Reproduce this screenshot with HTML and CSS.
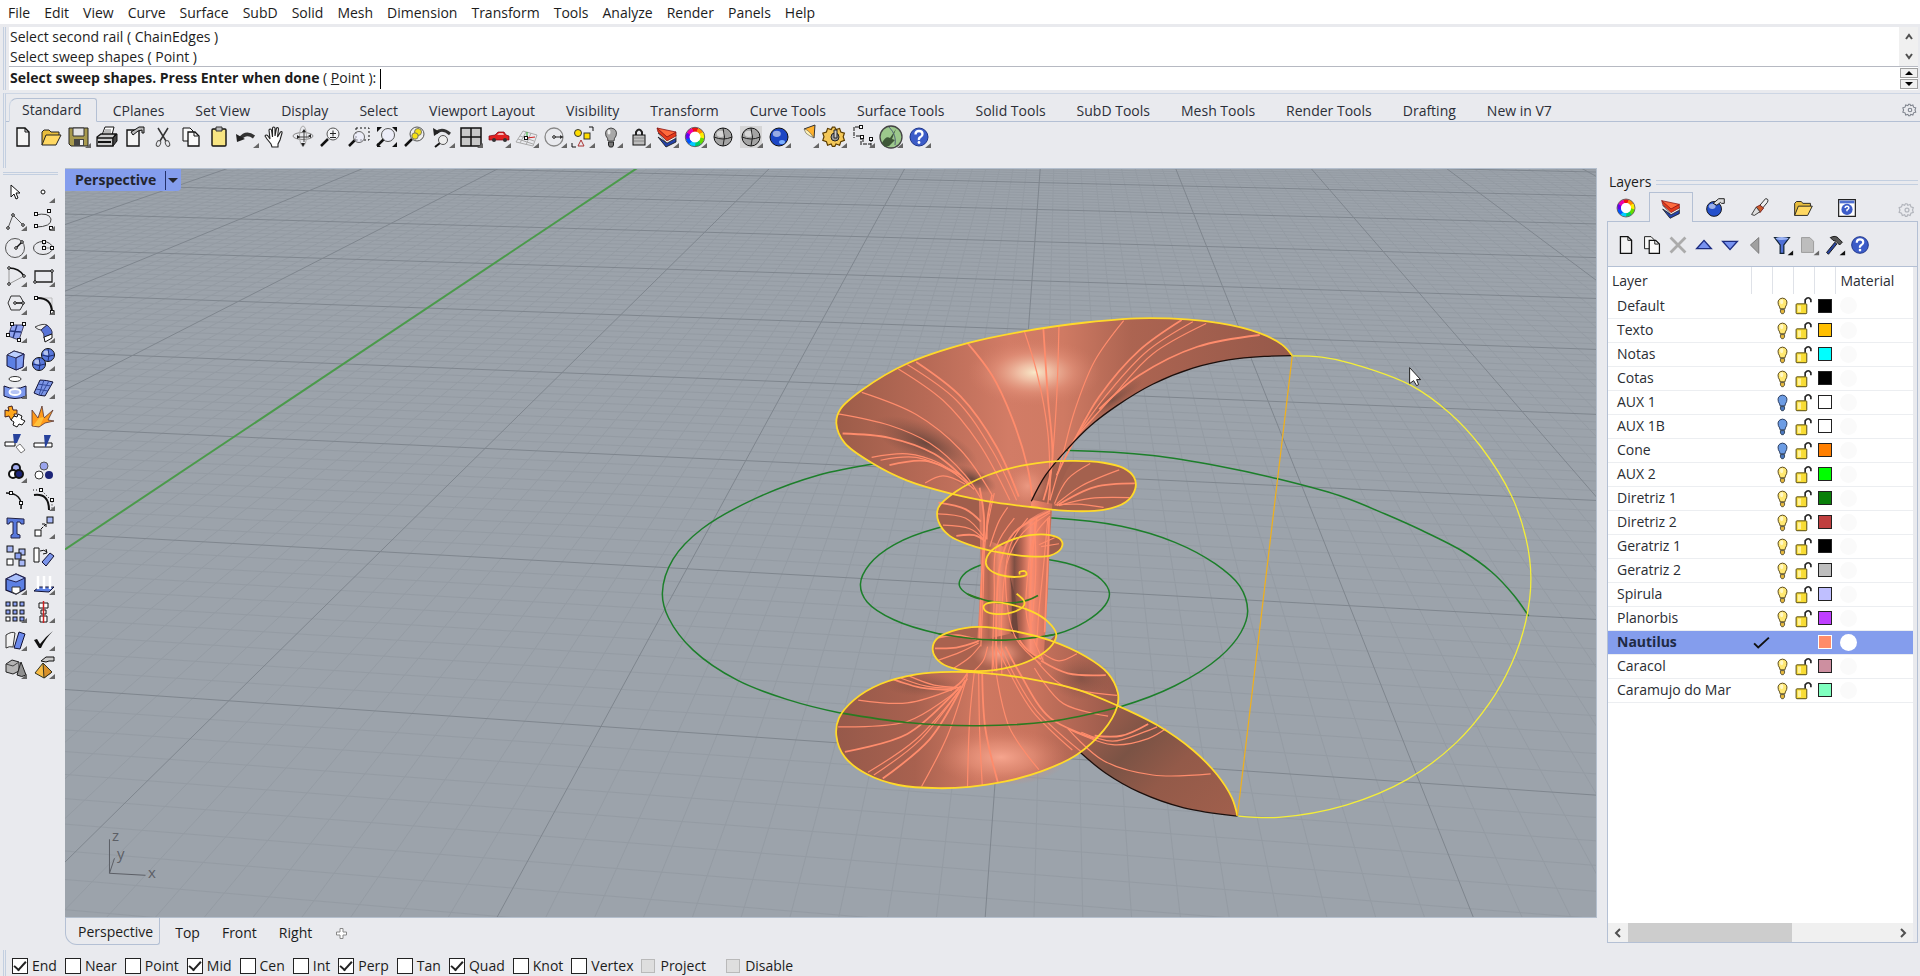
FILE: index.html
```html
<!DOCTYPE html>
<html lang="en">
<head>
<meta charset="utf-8">
<title>Rhinoceros - Perspective</title>
<link rel="stylesheet" href="styles.css">
</head>
<body>
<nav class="menubar" aria-label="Main menu">
  <button>File</button><button>Edit</button><button>View</button><button>Curve</button><button>Surface</button><button>SubD</button><button>Solid</button><button>Mesh</button><button>Dimension</button><button>Transform</button><button>Tools</button><button>Analyze</button><button>Render</button><button>Panels</button><button>Help</button>
</nav>

<section class="command" aria-label="Command line">
  <div class="history">
    <div class="history-lines">
      <p>Select second rail ( ChainEdges )</p>
      <p>Select sweep shapes ( Point )</p>
    </div>
    <div class="history-scroll">
      <button aria-label="Scroll up"><svg viewBox="0 0 8 8"><path d="M1 6l3-4 3 4" fill="none" stroke="#505050" stroke-width="2"/></svg></button>
      <button aria-label="Scroll down"><svg viewBox="0 0 8 8"><path d="M1 2l3 4 3-4" fill="none" stroke="#505050" stroke-width="2"/></svg></button>
    </div>
  </div>
  <div class="prompt">
    <label for="cmd"><b>Select sweep shapes. Press Enter when done</b> ( <u>P</u>oint ):</label>
    <input id="cmd" type="text" autocomplete="off">
    <div class="spinner">
      <button aria-label="Previous"><svg viewBox="0 0 8 4"><path d="M0 4l4-4 4 4z"/></svg></button>
      <button aria-label="Next"><svg viewBox="0 0 8 4"><path d="M0 0l4 4 4-4z"/></svg></button>
    </div>
  </div>
</section>

<section class="ribbon">
  <div class="tabs" role="tablist">
    <button class="tab active" role="tab">Standard</button><button class="tab" role="tab">CPlanes</button><button class="tab" role="tab">Set View</button><button class="tab" role="tab">Display</button><button class="tab" role="tab">Select</button><button class="tab" role="tab">Viewport Layout</button><button class="tab" role="tab">Visibility</button><button class="tab" role="tab">Transform</button><button class="tab" role="tab">Curve Tools</button><button class="tab" role="tab">Surface Tools</button><button class="tab" role="tab">Solid Tools</button><button class="tab" role="tab">SubD Tools</button><button class="tab" role="tab">Mesh Tools</button><button class="tab" role="tab">Render Tools</button><button class="tab" role="tab">Drafting</button><button class="tab" role="tab">New in V7</button>
    <span class="fill"></span>
    <button class="gear" data-icon="gear" aria-label="Toolbar options"></button>
  </div>
  <div class="toolbar" data-icons="new open save+ print props cut copy paste undo+ pan rotate zoom zoomwin zoomext zoomsel undoview+ views+ car+ cplane+ osnap+ select+ bulb+ lock+ layers+ wheel+ shade ghost+ render+ spot+ options+ dim+ grass+ help+"></div>
</section>

<main class="work">
  <aside class="sidebar">
    <div class="grip"></div>
    <div class="tools" data-icons="arrow point+ polyline+ curve+ circle+ ellipse+ arc+ rect+ polygon+ fillet+ srfpts+ srfsweep+ box+ spheres+ extrude+ patch+ puzzle explode trim split group+ ungroup editpts ctrlpts+ text move+ copies orient boxedit+ project+ array+ align+ bend+ check+ solids+ pyramid+"></div>
  </aside>

  <section class="stage">
    <div class="viewport">
      <svg id="scene" class="scene" viewBox="65 169 1532 749" preserveAspectRatio="xMidYMid slice" role="img" aria-label="Perspective view of the swept surface">
        <defs>
          <linearGradient id="gHorn" gradientUnits="userSpaceOnUse" x1="440" y1="0" x2="1460" y2="0">
            <stop offset="0" stop-color="#9c5c49"/><stop offset=".2" stop-color="#b76a56"/><stop offset=".38" stop-color="#d27c66"/><stop offset=".5" stop-color="#cf7a63"/><stop offset=".65" stop-color="#ac6451"/><stop offset="1" stop-color="#96594a"/>
          </linearGradient>
          <radialGradient id="gShine"><stop offset="0" stop-color="#f9e8c8"/><stop offset=".25" stop-color="#f2c3a9" stop-opacity=".9"/><stop offset=".6" stop-color="#e89880" stop-opacity=".5"/><stop offset="1" stop-color="#d47e68" stop-opacity="0"/></radialGradient>
          <radialGradient id="gGlow"><stop offset="0" stop-color="#f6a58e"/><stop offset=".5" stop-color="#ea957d" stop-opacity=".6"/><stop offset="1" stop-color="#d47e68" stop-opacity="0"/></radialGradient>
          <radialGradient id="gDark"><stop offset="0" stop-color="#64443b" stop-opacity=".9"/><stop offset="1" stop-color="#7c4f42" stop-opacity="0"/></radialGradient>
          <linearGradient id="gTube" gradientUnits="userSpaceOnUse" x1="758" y1="0" x2="922" y2="0">
            <stop offset="0" stop-color="#e67f66"/><stop offset=".15" stop-color="#b06652"/><stop offset=".3" stop-color="#f08b70"/><stop offset=".42" stop-color="#c8705a"/><stop offset=".5" stop-color="#7e4f43"/><stop offset=".6" stop-color="#b56552"/><stop offset=".72" stop-color="#fa8f74"/><stop offset=".85" stop-color="#df7c64"/><stop offset="1" stop-color="#c86f59"/>
          </linearGradient>
          <linearGradient id="gFoot" gradientUnits="userSpaceOnUse" x1="440" y1="0" x2="1075" y2="0">
            <stop offset="0" stop-color="#96594a"/><stop offset=".28" stop-color="#a8614f"/><stop offset=".5" stop-color="#cf7861"/><stop offset=".7" stop-color="#c8735d"/><stop offset="1" stop-color="#98594a"/>
          </linearGradient>
          <linearGradient id="gTail" gradientUnits="userSpaceOnUse" x1="990" y1="1180" x2="1330" y2="1460">
            <stop offset="0" stop-color="#a8614f"/><stop offset=".35" stop-color="#7b5345"/><stop offset=".6" stop-color="#935a49"/><stop offset="1" stop-color="#a05f4c"/>
          </linearGradient>
        </defs>
        <rect x="65" y="169" width="1532" height="749" fill="#9ca3ab"/>
        <g id="grid"></g>
        <g id="model" transform="translate(640 290) scale(.4464 .3571)"></g>
        <g id="shapeCurve" transform="scale(1.2245)"></g>
        <g stroke="#5c5f66" stroke-width="1" fill="none"><path d="M109.500 840v34l36 2M109.500 874l5-15"/></g>
        <g class="axis"><text x="112" y="842">z</text><text x="117" y="860">y</text><text x="148" y="879">x</text></g>
        <path d="M1410.500 368v16l4-3 3 5 2-1-2-5h4z" fill="#fff" stroke="#222"/>
      </svg>
      <button class="view-title"><span>Perspective</span><i></i></button>
    </div>
    <div class="view-tabs" role="tablist">
      <button class="vtab active" role="tab">Perspective</button><button class="vtab" role="tab">Top</button><button class="vtab" role="tab">Front</button><button class="vtab" role="tab">Right</button>
      <button class="add" aria-label="New viewport"><svg viewBox="0 0 11 11"><path d="M4 .5h3V4h3.500v3H7v3.500H4V7H.5V4H4z" fill="#fff" stroke="#888"/></svg></button>
    </div>
  </section>

  <aside class="panel">
    <h2><span>Layers</span></h2>
    <div class="panel-tabs">
      <button data-icon="wheel" aria-label="Properties"></button><button class="on" data-icon="layers" aria-label="Layers"></button><button data-icon="material" aria-label="Rendering"></button><button data-icon="brush" aria-label="Materials"></button><button data-icon="open" aria-label="Libraries"></button><button data-icon="helpwin" aria-label="Help"></button>
      <span class="fill"></span>
      <button class="gear pale" data-icon="gear" aria-label="Panel options"></button>
    </div>
    <div class="panel-body">
      <div class="panel-tools" data-icons="new copy cross up down back funnel* sheet+ hammer* help"></div>
      <div class="list">
        <table>
          <thead><tr><th class="c-name">Layer</th><th></th><th></th><th></th><th></th><th class="c-mat">Material</th></tr></thead>
          <tbody id="layers"></tbody>
        </table>
      </div>
      <div class="hscroll">
        <button aria-label="Scroll left"><svg viewBox="0 0 8 10"><path d="M6 1L2 5l4 4" fill="none" stroke="#505050" stroke-width="2"/></svg></button>
        <div class="track"><div class="thumb"></div></div>
        <button aria-label="Scroll right"><svg viewBox="0 0 8 10"><path d="M2 1l4 4-4 4" fill="none" stroke="#505050" stroke-width="2"/></svg></button>
      </div>
    </div>
  </aside>
</main>

<footer class="osnap">
  <label><input type="checkbox" checked>End</label><label><input type="checkbox">Near</label><label><input type="checkbox">Point</label><label><input type="checkbox" checked>Mid</label><label><input type="checkbox">Cen</label><label><input type="checkbox">Int</label><label><input type="checkbox" checked>Perp</label><label><input type="checkbox">Tan</label><label><input type="checkbox" checked>Quad</label><label><input type="checkbox">Knot</label><label><input type="checkbox">Vertex</label><label class="soft"><input type="checkbox">Project</label><label class="soft last"><input type="checkbox">Disable</label>
</footer>
<script src="app.js"></script>
</body>
</html>
```
FILE: styles.css
```css
* { box-sizing: border-box; }
body {
  margin: 0;
  height: 100vh;
  display: flex;
  flex-direction: column;
  overflow: hidden;
  background: #e9eaee;
  color: #1c1c1c;
  font: 14px/20px "Open Sans", "Noto Sans", sans-serif;
}
button {
  margin: 0;
  padding: 0;
  border: 0;
  background: none;
  color: inherit;
  font: inherit;
  white-space: nowrap;
}
p, h2 { margin: 0; font: inherit; }
svg { display: block; }
.fill { flex: 1; }

.menubar {
  display: flex;
  gap: 14px;
  height: 24px;
  padding: 3px 8px 1px;
  background: #fff;
}

.command {
  margin: 3px 2px 0 3px;
  padding-left: 3px;
  border-left: 3px double #c3cfe0;
}
.history {
  display: flex;
  height: 39px;
  background: #fff;
}
.history-lines { flex: 1; padding-left: 1px; }
.history-scroll {
  width: 19px;
  display: flex;
  flex-direction: column;
  background: #f0f0f0;
}
.history-scroll button { flex: 1; display: grid; place-items: center; }
.history-scroll svg { width: 8px; height: 8px; }
.prompt {
  display: flex;
  align-items: center;
  height: 24px;
  padding-left: 1px;
  border-top: 1px solid #b6b9c2;
  background: #fff;
}
.prompt label { white-space: pre; padding-bottom: 2px; }
.prompt input {
  flex: 1;
  height: 20px;
  margin-left: 4px;
  padding: 0 2px;
  border: 0;
  border-left: 1px solid #000;
  outline: 0;
  font: inherit;
}
.spinner { width: 18px; display: grid; gap: 1px; }
.spinner button {
  display: grid;
  place-items: center;
  height: 10px;
  border: 1px solid #a0a0a0;
  background: #f0f0f0;
}
.spinner svg { width: 8px; height: 4px; }

.ribbon {
  height: 75px;
  margin: 3px 0 0 3px;
  border-left: 3px double #c3cfe0;
  border-top: 1px solid #cdd6e4;
}
.tabs { display: flex; gap: 1px; height: 28px; padding: 4px 0 0 3px; border-bottom: 1px solid #b4c0d4; }
.tab { height: 24px; padding: 1px 15px 0; color: #2c2f38; line-height: 22px; }
.tab.active {
  border: 1px solid #b4c0d4;
  border-left-color: #cdd6e4;
  border-bottom-color: #e9eaee;
  border-radius: 8px 3px 0 0;
  padding: 0 14px 0 12px;
}
.gear svg { width: 20px; height: 20px; }
.toolbar { display: flex; padding: 1px 0 0 3px; }
.toolbar svg, .tools svg { width: 28px; height: 28px; }

.work { flex: 1; min-height: 0; display: flex; }
.sidebar { width: 65px; padding: 4px 0 0; }
.grip { height: 3px; margin: 0 7px 3px 3px; border: solid #c3cfe0; border-width: 1px 0; }
.tools { display: grid; grid-template-columns: 28px 28px; padding-left: 1px; }

.stage { flex: 1; min-width: 0; display: flex; flex-direction: column; }
.viewport { position: relative; flex: 1; min-height: 0; border: 1px solid #b4bfcd; border-width: 1px 1px 1px 0; }
.scene { width: 100%; height: 100%; }
.scene path { vector-effect: non-scaling-stroke; }
.axis { fill: #5c5f66; font-size: 15px; }
.view-title {
  position: absolute;
  left: 0;
  top: 0;
  display: flex;
  align-items: center;
  gap: 9px;
  height: 22px;
  padding: 0 3px 0 10px;
  border-radius: 0 0 4px 0;
  background: #849ded;
  color: #23252e;
  font-weight: 700;
}
.view-title i { height: 19px; padding-left: 2px; border-left: 1px solid #23306a; display: grid; align-items: center; }
.view-title i::before { content: ""; border: 5px solid transparent; border-top-color: #23252e; border-bottom: 0; }
.view-tabs { display: flex; height: 32px; padding-bottom: 5px; }
.vtab { padding: 2px 11px 0; color: #1c1c1c; }
.vtab.active {
  padding: 2px 6px 0 12px;
  margin-right: 4px;
  border: 1px solid #b4c0d4;
  border-top: 0;
  border-radius: 0 0 3px 12px;
}
.add { padding: 4px 13px 0; }
.add svg { width: 11px; height: 11px; }

.panel { width: 323px; padding: 4px 2px 7px 10px; display: flex; flex-direction: column; }
.panel h2 { display: flex; align-items: center; gap: 5px; padding-left: 2px; }
.panel h2::after { content: ""; flex: 1; height: 3px; border: solid #c3cfe0; border-width: 1px 0; }
.panel-tabs { display: flex; height: 29px; }
.panel-tabs button { width: 44px; padding-top: 2px; display: grid; place-items: center; }
.panel-tabs .on {
  z-index: 1;
  margin-bottom: -1px;
  border: 1px solid #b4c0d4;
  border-bottom: 0;
  background: #e9eaee;
}
.panel-tabs button:first-child { width: 42px; padding-right: 4px; }
.panel-tabs svg, .panel-tools svg { width: 26px; height: 26px; }
.panel-tabs button.gear { width: 22px; padding-top: 6px; }
.panel-tabs .gear.pale svg { width: 22px; height: 22px; opacity: .5; }
.panel-body { flex: 1; min-height: 0; display: flex; flex-direction: column; border: 1px solid #b4c0d4; }
.panel-tools { display: flex; align-items: center; height: 45px; padding: 2px 0 0 5px; border-bottom: 1px solid #b4c0d4; }
.list { flex: 1; margin-right: 4px; background: #fff; overflow: hidden; }
table { width: 100%; border-collapse: collapse; table-layout: fixed; color: #2a2d33; }
th { height: 27px; padding: 0; width: 21px; border-right: 1px solid #dfe2e8; font-weight: 400; text-align: left; }
th.c-name { width: 143px; padding-left: 4px; }
th.c-mat { width: auto; border: 0; padding-left: 5px; }
td { height: 24px; padding: 0; border-bottom: 1px solid #eceef1; text-align: center; }
td:first-child { padding-left: 9px; text-align: left; }
td svg { width: 23px; height: 23px; margin: 0 -1px; }
.swatch { display: block; width: 14px; height: 14px; margin: auto; border: 1px solid #222; }
.ball { display: block; width: 17px; height: 17px; margin-left: 5px; border-radius: 50%; background: #fafafa; }
.current td { background: #849ded; font-weight: 700; color: #1f2a44; }
.current .swatch { border-color: #fff; }
.current .ball { background: #fff; }
.hscroll { display: flex; height: 19px; margin-right: 4px; background: #f0f0f0; }
.hscroll button { width: 20px; display: grid; place-items: center; }
.hscroll svg { width: 8px; height: 10px; }
.track { flex: 1; display: flex; }
.thumb { width: 62%; background: #cdcdcd; }

.osnap {
  display: flex;
  gap: 8px;
  height: 26px;
  margin-left: 3px;
  padding: 6px 0 0 6px;
  border-left: 3px double #c3cfe0;
}
.osnap label { display: flex; align-items: center; gap: 4px; height: 20px; }
.osnap input {
  appearance: none;
  width: 16px;
  height: 16px;
  margin: 0;
  border: 1px solid #222;
  background: #fff;
  display: grid;
  place-items: center;
}
.osnap input:checked::before {
  content: "";
  width: 10px;
  height: 5px;
  margin-bottom: 3px;
  border: solid #222;
  border-width: 0 0 2px 2px;
  transform: rotate(-48deg);
}
.osnap .soft input { width: 14px; height: 14px; border-color: #b9b9b9; background: #dedede; }
.osnap .soft { gap: 5px; }
.osnap .last { margin-left: 12px; }
```
FILE: app.js
```js
const K = 'fill="none" stroke="#111"';
const W = 'fill="#fff" stroke="#111"';
const dot = (x, y) => `<circle cx="${x}" cy="${y}" r="1.300" ${W}/>`;
const sq = (x, y) => `<rect x="${x - 1.5}" y="${y - 1.5}" width="3" height="3" ${W}/>`;
const box = (x, y, s, f) => `<rect x="${x}" y="${y}" width="${s}" height="${s}" fill="${f}" stroke="#111"/>`;
const lens = '<path d="M11 16l-7 7" stroke="#111" stroke-width="2.500"/>';
const ring = (a, b, r, w) => ['#e11', '#f80', '#fe0', '#6d0', '#0c6', '#0cf', '#05f', '#60e', '#e0a'].map((c, i) => {
  const t = (n) => `${(a + r * Math.sin(n * Math.PI / 4.5)).toFixed(1)} ${(b - r * Math.cos(n * Math.PI / 4.5)).toFixed(1)}`;
  return `<path d="M${t(i - .55)}L${t(i)}L${t(i + .55)}" fill="none" stroke="${c}" stroke-width="${w}"/>`;
}).join('');
const ball = (x, y, r, c) => `<circle cx="${x}" cy="${y}" r="${r}" fill="${c}" stroke="#111"/><ellipse cx="${x - r * .25}" cy="${y - r * .35}" rx="${r * .45}" ry="${r * .35}" fill="#fff" opacity=".55"/>`;
const folder = '<path d="M5 22V9l2-2h5l2 2h8v3" fill="#e8bd3c" stroke="#222"/><path d="M5 22l4-10h15l-5 10z" fill="#ffd862" stroke="#222"/>';
const question = '<circle cx="14" cy="14" r="9" fill="#3c5cc8" stroke="#1d3488"/><path d="M10.500 11.500q0-3.500 3.500-3.500t3.500 3q0 2-2 3t-1.500 3" fill="none" stroke="#fff" stroke-width="2.300"/><circle cx="14" cy="19.500" r="1.400" fill="#fff"/>';
const cog = 'M14 6l1 2 3-1 1 3 3 1-1 3 1 3-3 1-1 3-3-1-1 2-2 0-1-2-3 1-1-3-3-1 1-3-1-3 3-1 1-3 3 1 1-2z';

const ICONS = {
  new: '<path d="M8 5h8l4 4v14H8z" fill="#f4f4f4" stroke="#111" stroke-width="1.400"/><path d="M16 5v4h4" ' + K + '/>',
  open: folder,
  save: '<path d="M4 5h19v18H6l-2-2z" fill="#a89a4e" stroke="#222"/><path d="M8 5h11v8H8z" fill="#e4e4e4" stroke="#333"/><path d="M9 16h10v7H9z" fill="#444"/><path d="M15 17h3v5h-3z" fill="#eee"/>',
  print: '<path d="M9 12l3-8h9l-2 8z" fill="#fff" stroke="#111"/><path d="M4 14l4-3h15l-3 4H4zM4 15h16v8H4z" fill="#ccc" stroke="#111" stroke-width="1.300"/><path d="M20 15l4-4v7l-4 5z" fill="#444" stroke="#111"/><path d="M5 19h13" stroke="#111" stroke-width="2"/><path d="M12 7h6M11 9h7" stroke="#777"/>',
  props: '<path d="M6 7h12v16H6z" fill="#f4f4f4" stroke="#111" stroke-width="1.400"/><path d="M10 9l5-3 3-2h5v6h-2V7l-4 1-5 4z" fill="#bbb" stroke="#111"/>',
  cut: '<path d="M9 5l8 13M19 5l-8 13" stroke="#333" stroke-width="1.500"/><ellipse cx="9.500" cy="20.500" rx="2" ry="3" transform="rotate(25 9.500 20.500)" fill="none" stroke="#555"/><ellipse cx="18.500" cy="20.500" rx="2" ry="3" transform="rotate(-25 18.500 20.500)" fill="none" stroke="#555"/>',
  copy: '<path d="M6 5h7l3 3v10H6z" fill="#fafafa" stroke="#111"/><path d="M11 9h7l4 4v10H11z" fill="#fafafa" stroke="#111" stroke-width="1.300"/><path d="M17 9v4h4" ' + K + '/>',
  paste: '<rect x="7" y="6" width="14" height="17" rx="1" fill="#f8e582" stroke="#111" stroke-width="1.400"/><path d="M11 4h6v4h-6z" fill="#bbb" stroke="#333"/>',
  undo: '<path d="M7 16q6-8 14-2" fill="none" stroke="#333" stroke-width="3.500"/><path d="M3 11l1 8 8-3z" fill="#222"/>',
  pan: '<path d="M11 24l-1-3-4-5-2-3q1-2 3 0l2 3-1-9q1-2 2.500 0l1 7V5q1-2 2.500 0v8l1.500-8q2-1 2 1l-1 8 3-5q2-1 1.500 1l-2 7-2 4v3z" fill="#fff" stroke="#222" stroke-width="1.100"/>',
  rotate: '<ellipse cx="14" cy="13" rx="10" ry="3.500" fill="none" stroke="#888"/><ellipse cx="14" cy="13" rx="3.500" ry="10" fill="none" stroke="#aaa"/><path d="M15 8v11M9 14h11" stroke="#444"/><path d="M15 6l2 3h-4zM14 24l2-4h-4zM8 12v4l3-2zM22 11v4l-3-2z" fill="#222"/>',
  zoom: lens + '<circle cx="16" cy="11" r="6" fill="#f2f3f5" stroke="#555"/><path d="M16 7.500v6M13 10.500h6M13 14.500h6" stroke="#222"/>',
  zoomwin: '<rect x="11" y="5" width="13" height="12" fill="none" stroke="#111" stroke-dasharray="2 2"/>' + lens + '<circle cx="14" cy="14" r="5.500" fill="#eef" fill-opacity=".6" stroke="#666"/>',
  zoomext: '<path d="M4 4h5l-5 5zM24 4h-5l5 5zM24 24h-5l5-5zM4 24h4l-4-4z" fill="#111"/>' + lens + '<circle cx="15" cy="12" r="6.500" fill="#eef" fill-opacity=".6" stroke="#555"/>',
  zoomsel: lens + '<circle cx="16" cy="11" r="7" fill="#eee" stroke="#555"/><circle cx="17" cy="9" r="3.500" fill="#f6e216" stroke="#776"/><circle cx="14" cy="13" r="3.200" fill="#f6e216" stroke="#776"/>',
  undoview: '<path d="M7 10q6-6 14 1" fill="none" stroke="#333" stroke-width="3"/><path d="M4 5l1 8 6-4z" fill="#222"/><path d="M11 20l-5 4" stroke="#111" stroke-width="2"/><circle cx="14" cy="17" r="4.500" fill="#eee" stroke="#555"/>',
  views: '<path d="M4 5h20v18H4z" fill="#c8c8c8" stroke="#111" stroke-width="1.500"/><path d="M14 5v18M4 14h20" stroke="#111" stroke-width="1.500"/>',
  car: '<path d="M4 17v-4l6-1 3-3h6l2 3 3 1v4z" fill="#e02020" stroke="#701" stroke-width=".7"/><path d="M12 12l2-2h4l1 2z" fill="#f6b0b0"/><circle cx="9" cy="17" r="2" fill="#333"/><circle cx="20" cy="17" r="2" fill="#333"/>',
  cplane: '<path d="M3 19l7-11 14 4-4 11zM7 13l14 5M13 9l-6 11M18 10l-5 12M5 16l15 5" fill="none" stroke="#aaa"/><path d="M14 15V9" stroke="#2a2"/><path d="M14 15l8-1" stroke="#c22"/>' + sq(13, 15),
  osnap: '<circle cx="13" cy="14" r="9" fill="none" stroke="#888" stroke-width="1.300"/><path d="M13 14h9" stroke="#222"/><path d="M19 12v4l3-2z" fill="#333"/>' + dot(13, 14),
  select: '<circle cx="9" cy="10" r="3.500" fill="#fd0" stroke="#333"/><rect x="15" y="10" width="6" height="6" fill="#fd0" stroke="#333"/><path d="M12 17l3 6H9z" fill="none" stroke="#a33"/><path d="M20 4h4v4M3 20v4h4" ' + K + '/>',
  bulb: '<path d="M11 18q0-3-2-5-2-7 5-8 7 1 5 8-2 2-2 5z" fill="#a8a8a8" stroke="#444"/><path d="M11.500 19h5v3l-1 2h-3l-1-2z" fill="#777" stroke="#222"/><ellipse cx="12" cy="9" rx="1.500" ry="2.500" fill="#eee"/>',
  lock: '<path d="M11 12V9q3-5 6 0v3" fill="none" stroke="#222" stroke-width="2"/><rect x="8" y="12" width="12" height="10" fill="#bdbdbd" stroke="#111"/><path d="M9 15h10M9 18h10" stroke="#888"/>',
  layers: '<path d="M5 14l8 10 10-5v-4l-9 5z" fill="#2543a8" stroke="#111" stroke-width=".8"/><path d="M5 10l9 10 9-5v-3l-9 4z" fill="#fff" stroke="#222" stroke-width=".6"/><path d="M4 5l10 8 9-4v4l-9 5-9-9z" fill="#e43a1a" stroke="#711" stroke-width=".7"/><path d="M4 5l19 4-9 5z" fill="#ff6a3c" stroke="#811" stroke-width=".8"/>',
  wheel: ring(14, 14, 7.5, 4) + '<circle cx="14" cy="14" r="5.300" fill="#fff"/><circle cx="14" cy="14" r="9.700" fill="none" stroke="#333" stroke-width=".7"/>',
  shade: ball(14, 14, 9, '#a4a4a4') + '<path d="M5 14q9 4 18 0M14 5q3 9 0 18" stroke="#222" fill="none"/>',
  ghost: '<rect x="3" y="3" width="22" height="22" fill="#ccc" opacity=".7"/>' + ball(14, 14, 9, '#a4a4a4') + '<path d="M5 14q9 4 18 0M14 5q3 9 0 18" stroke="#222" fill="none"/>',
  render: ball(14, 14, 9, '#1c46c4') + '<ellipse cx="17" cy="19" rx="3" ry="2" fill="#7cb0ff"/>',
  spot: '<path d="M11 6l11-4-1 13z" fill="#ffb12c" stroke="#333"/><path d="M11 6q4 0 10 9l-4-2q-5-2-6-7z" fill="#fff2b4" stroke="#555" stroke-width=".6"/>',
  options: `<path d="${cog}" transform="translate(-3 -3) scale(1.200)" fill="#f4c858" stroke="#5a3c00"/><circle cx="14" cy="14" r="4" fill="#999" stroke="#222"/><path d="M13 7h3v8h-3z" fill="#ccc" stroke="#222"/>`,
  dim: '<path d="M10 4H5v11M10 4h2M7 13h5v10M14 15v4M22 15v9M14 21h8" ' + K + ' stroke-dasharray="4 1"/>' + sq(12, 4) + sq(13, 14) + sq(22, 16),
  grass: '<circle cx="14" cy="14" r="11" fill="#9cc88c" stroke="#444" stroke-width="1.300"/><path d="M5 20q4-8 8-5l6-9-4 10 3 1-6 6-4 1z" fill="#3f5838"/><path d="M12 4q8 8 6 18" fill="none" stroke="#567"/>',
  help: question,
  gear: '<path d="' + cog + '" fill="none" stroke="#7d828c" stroke-width="1.500"/><circle cx="14" cy="14" r="2.500" fill="none" stroke="#7d828c" stroke-width="1.500"/>',

  arrow: '<path d="M10 7v12l3-3 2 5 2-1-2-5h4z" ' + W + '/>',
  point: '<circle cx="14" cy="14" r="2" ' + W + '/>',
  polyline: '<path d="M7 22l5-13 10 10" fill="none" stroke="#555"/>' + dot(7, 22) + dot(12, 9) + dot(22, 19),
  curve: '<path d="M6 9q14-3 16 4 1 8-16 8" fill="none" stroke="#444"/>' + sq(7, 8) + sq(7, 20) + sq(20, 5) + sq(22, 22),
  circle: '<circle cx="14" cy="14" r="9.500" fill="none" stroke="#555"/><path d="M15 14l6-6" stroke="#111" stroke-width="1.500"/>' + dot(15, 14) + dot(21, 8),
  ellipse: '<ellipse cx="14" cy="14" rx="9.500" ry="6.500" fill="none" stroke="#444"/><path d="M15 14V7M15 14h8" stroke="#888"/>' + sq(15, 14) + sq(15, 8) + sq(23, 14),
  arc: '<path d="M8 6v16l15-8" fill="none" stroke="#999"/><path d="M8 6q10 0 15 8" fill="none" stroke="#111" stroke-width="1.500"/>' + dot(8, 6) + dot(8, 22) + dot(23, 14),
  rect: '<path d="M6 9h17v11H6z" fill="none" stroke="#222" stroke-width="1.300"/>' + dot(6, 20) + dot(23, 9),
  polygon: '<path d="M10 6h9l4 7-4 7h-9l-3-7z" fill="none" stroke="#333"/><path d="M14 13h8" stroke="#111" stroke-width="1.500"/>' + dot(14, 13) + dot(22, 13),
  fillet: '<path d="M7 8h16v15" fill="none" stroke="#bbb"/><path d="M7 8q16-1 16 15" fill="none" stroke="#111" stroke-width="2"/>' + sq(7, 8) + sq(23, 22),
  srfpts: '<path d="M11 7l12 0-5 15-11-4z" fill="#8fa2f0" stroke="#446"/><path d="M16 7l-4 13M9 13l11 1" stroke="#24347a" stroke-width="1.300"/>' + sq(11, 6) + sq(23, 6) + sq(7, 17) + sq(18, 22),
  srfsweep: '<path d="M6 9q8-4 12-2l-6 5q-3 0-6-3z" fill="#eee" stroke="#444"/><path d="M12 12l6-5q6 5 5 9l-8 4q1-4-3-8z" fill="#5874d8" stroke="#335"/><path d="M15 19l8-3v4l-7 4z" ' + W + '/>',
  box: '<path d="M6 9l7-4 10 3-1 13-7 3-9-4z" fill="#5c80e4" stroke="#113"/><path d="M6 9l9 3 8-4-10-3z" fill="#bcd0ff" stroke="#335"/><path d="M15 12v12l7-3 1-13z" fill="#7f9cf2" stroke="#225"/>',
  spheres: ball(19, 9, 6.5, '#5878dc') + ball(10, 18, 6.5, '#5878dc') + '<path d="M13 9q6 3 12 0M19 3q2 6 0 12M4 18q6 3 12 0M10 12q2 6 0 12" stroke="#1c2c70" fill="none"/>',
  extrude: '<ellipse cx="14" cy="5" rx="6" ry="2.500" fill="#fff" stroke="#333"/><path d="M3 12q11 5 22 0v10q-11 5-22 0z" fill="#7c98ee" stroke="#113"/><ellipse cx="14" cy="18" rx="5.500" ry="3" fill="#b5c4f4" stroke="#fff" stroke-width="2"/>',
  patch: '<path d="M11 6q6 0 13 2l-8 14q-6 0-11-3z" fill="#7d96e6" stroke="#113"/><path d="M9 10l13 2M7 15l12 2M15 6L10 21M20 7l-8 14" stroke="#334a9c" fill="none"/>',
  puzzle: '<path d="M4 8l4 1-1-4 4-1 1 4 4 0v4l-3 0 1 5-4 1-2-4-4 1z" fill="#ffa71c" stroke="#422"/><path d="M13 14l3 1 1-3 4 2-1 3 4 2-3 4-3-1-2 3-4-2 1-3-3-2z" ' + W + '/>',
  explode: '<path d="M3 24V8l6 8 4-12 2 12 9-8-5 10 6 1-9 2-6 4z" fill="#ff9a1c" stroke="#533" stroke-width=".8"/><path d="M4 24l6-8 5-1-4 9z" fill="#ffc23c"/>',
  trim: '<path d="M4 12h10v4H4z" ' + W + '/><path d="M12 4h8l-4 9h-3z" fill="#27429c"/><path d="M15 17l4-3 5 6-4 3z" fill="#fff" stroke="#777"/>',
  split: '<path d="M5 13h18v4H5z" ' + W + '/><path d="M15 5h7l-5 12h-1z" fill="#27429c"/>',
  group: '<g stroke="#111" stroke-width="2"><circle cx="15" cy="10" r="4" fill="#a4aef0"/><circle cx="12" cy="16" r="4" fill="#fff"/><circle cx="18" cy="16" r="4" fill="#1c2478"/></g>',
  ungroup: '<circle cx="15" cy="8" r="4" fill="#9aa4ec" stroke="#555"/><circle cx="10" cy="17" r="4" fill="#fff" stroke="#333"/><circle cx="20" cy="17" r="4" fill="#1c2478"/>',
  editpts: '<path d="M5 7q17 0 15 16" fill="none" stroke="#111" stroke-width="1.500"/>' + sq(10, 7) + sq(20, 17),
  ctrlpts: '<path d="M5 9q15-2 15 15" fill="none" stroke="#111" stroke-width="2"/><path d="M4 4h8l11 11v9" fill="none" stroke="#111" stroke-dasharray="1 2"/>' + sq(12, 4) + sq(23, 14),
  text: '<path d="M6 4l17 1v5h-3l-1-2h-3v12l3 1v3H10v-3l2-1V8H9l-1 2H6z" fill="#5878dc" stroke="#224"/>',
  move: box(18, 3, 6, '#a8b8f6') + box(6, 16, 6, '#fff') + '<path d="M12 15l5-5M13 10h4v4" ' + K + ' stroke-dasharray="3 1"/>',
  copies: box(6, 4, 6, '#a8b8f6') + box(18, 7, 6, '#a8b8f6') + box(14, 11, 6, '#8ba0f2') + box(6, 17, 6, '#fff') + box(18, 18, 6, '#a8b8f6'),
  orient: '<path d="M5 6h5v14H5z" ' + W + '/><path d="M13 20l8-9 4 3-8 10z" fill="#7a94ea" stroke="#113"/><path d="M11 9q4-2 7 1M14 12l4-1-1-4" ' + K + '/>',
  boxedit: '<path d="M5 9l10-5 9 4v11l-9 5-10-4z" fill="#5c80e4" stroke="#113" stroke-width="1.300"/><path d="M5 9l10 3 9-4-9-4z" fill="#a9c0fb" stroke="#225"/><path d="M11 17h8v5l-4 2-4-2z" fill="#fff" stroke="#333"/>',
  project: '<path d="M5 21l5-4h15l-5 5z" fill="#5c80e4" stroke="#113"/><path d="M9 6v13M15 6v13M21 6v13" stroke="#fff" stroke-width="2.500"/>',
  array: [4, 12, 19].map((y) => [5, 12, 19].map((x) => box(x, y, 4, y === 19 && x === 5 ? '#fff' : '#8ba0f2')).join('')).join(''),
  align: '<path d="M10 5h9v5h-9zM12 12h5v4h-5zM11 18h7v6h-7z" ' + W + '/><path d="M14.500 3v22" stroke="#c22" stroke-width="1.500"/>',
  bend: '<path d="M5 9q6-4 9-2l-2 14q-4-1-7 1z" fill="#f2f2f2" stroke="#333"/><path d="M13 22l5-16 6 2-5 15z" fill="#6c8aec" stroke="#113"/>',
  check: '<path d="M5 14l3-1 3 5Q16 11 24 5 16 13 12 22h-2z" fill="#111"/>',
  solids: '<path d="M5 10l6-4 7 2v9l-6 3-7-2z" fill="#b4b4b4" stroke="#222"/><path d="M5 10l7 2 6-4" fill="none" stroke="#444"/><path d="M20 8l5 13q-4 3-9 0z" fill="#909090" stroke="#222"/>',
  pyramid: '<path d="M14 9l9 9-8 6-9-5z" fill="#f6bb44" stroke="#332"/><path d="M14 9l1 15 8-6z" fill="#d8902a" stroke="#332"/><path d="M12 7l5-4h8v4h-5l-3 1z" fill="#ccc" stroke="#111"/>',

  material: ball(13, 15, 8, '#2450cc') + '<path d="M12 9l6-5h6v5h-3l-1-1-4 3z" fill="#ddd" stroke="#111"/>',
  brush: '<path d="M15 11l6-7q4 0 2 4l-5 6z" fill="#eee" stroke="#222"/><path d="M11 13l4-2 4 3-4 5z" fill="#cc5c2c" stroke="#722"/><path d="M6 21l5-8 4 5-6 4z" fill="#ddd" stroke="#333"/>',
  helpwin: '<path d="M5 5h18v18H5z" fill="#fff" stroke="#222" stroke-width="1.300"/><path d="M6 6h16v3H6z" fill="#5070d0"/><circle cx="14" cy="15.500" r="6" fill="#3c5cc8"/><path d="M12 14q0-2 2-2t2 2q0 1-2 2v1.500" fill="none" stroke="#fff" stroke-width="1.600"/>',
  cross: '<path d="M6 6l16 16M22 6L6 22" stroke="#ababab" stroke-width="3"/>',
  up: '<path d="M14 9l8 9H6z" fill="#7893f0" stroke="#1c2c80" stroke-width="1.400"/>',
  down: '<path d="M14 19l8-9H6z" fill="#7893f0" stroke="#1c2c80" stroke-width="1.400"/>',
  back: '<path d="M8 14l9-8v17z" fill="#a0a0a0" stroke="#777"/>',
  funnel: '<path d="M6 6h16l-6 8v9h-4v-9z" fill="#4f70d6" stroke="#123" stroke-width="1.300"/><ellipse cx="14" cy="7" rx="7" ry="1.600" fill="#9cb4f6"/>',
  sheet: '<path d="M7 6h9l4 4v12H7z" fill="#bdbdbd" stroke="#999"/>',
  hammer: '<path d="M6 22l9-11 2 2-9 11z" fill="#2743a0" stroke="#111"/><path d="M10 6q6-3 9 1l4 4-3 3-4-4-3-1z" fill="#555" stroke="#111"/>',
  on: '<path d="M11 18q0-2-2-5-2-7 5-8 7 1 5 8-2 3-2 5z" fill="#ffe873" stroke="#5a4a1c" stroke-width="1.200"/><path d="M11.500 19h5v3l-1.500 2h-2l-1.500-2z" fill="#e8b93c" stroke="#443"/><ellipse cx="13" cy="9.500" rx="2" ry="3" fill="#fff8c8"/>',
  off: '<path d="M11 18q0-2-2-5-2-7 5-8 7 1 5 8-2 3-2 5z" fill="#6c9ce4" stroke="#2a3c60" stroke-width="1.200"/><path d="M11.500 19h5v3l-1.500 2h-2l-1.500-2z" fill="#4c78c0" stroke="#234"/>',
  unlock: '<path d="M16 12V7q4-5 7 0v3" fill="none" stroke="#222" stroke-width="2"/><rect x="5" y="12" width="13" height="12" rx="1" fill="#f8dc34" stroke="#554a10" stroke-width="1.200"/><path d="M7 14h4v8H7z" fill="#fff29a"/>',
  tick: '<path d="M5 15l5 5 13-12" fill="none" stroke="#111" stroke-width="2.300"/>'
};

function icon(token) {
  const flag = /[+*]$/.test(token) ? token.slice(-1) : '';
  const name = flag ? token.slice(0, -1) : token;
  const mark = flag ? `<path d="M26 20v5h-6z" fill="${flag === '*' ? '#111' : '#666'}"/>` : '';
  return `<svg viewBox="0 0 28 28">${ICONS[name]}${mark}</svg>`;
}

document.querySelectorAll('[data-icons]').forEach((bar) => {
  bar.innerHTML = bar.dataset.icons.split(' ')
    .map((t) => `<button aria-label="${t.replace(/[+*]/, '')}">${icon(t)}</button>`).join('');
});
document.querySelectorAll('[data-icon]').forEach((b) => { b.innerHTML = icon(b.dataset.icon); });

const LAYERS = [
  ['Default', 'on', '#000000'], ['Texto', 'on', '#ffbf00'], ['Notas', 'on', '#00ffff'], ['Cotas', 'on', '#000000'],
  ['AUX 1', 'off', '#ffffff'], ['AUX 1B', 'off', '#ffffff'], ['Cone', 'off', '#ff7f00'], ['AUX 2', 'on', '#00ff00'],
  ['Diretriz 1', 'on', '#0a7f0a'], ['Diretriz 2', 'on', '#bf3f3f'], ['Geratriz 1', 'on', '#000000'], ['Geratriz 2', 'on', '#bebebe'],
  ['Spirula', 'on', '#bfbfff'], ['Planorbis', 'on', '#bf3fff'], ['Nautilus', 'current', '#ff8c69'],
  ['Caracol', 'on', '#cd8fa0'], ['Caramujo do Mar', 'on', '#7fffbf']
];
document.getElementById('layers').innerHTML = LAYERS.map(([name, state, color]) => {
  const cur = state === 'current';
  return `<tr${cur ? ' class="current"' : ''}><td>${name}</td><td>${cur ? icon('tick') : ''}</td>` +
    `<td>${cur ? '' : icon(state)}</td><td>${cur ? '' : icon('unlock')}</td>` +
    `<td><span class="swatch" style="background:${color}"></span></td><td><span class="ball"></span></td></tr>`;
}).join('');

/* Construction plane grid: two line families, each through its vanishing point. */
const H = -119;
let minor = '';
let major = '';
for (let i = -25; i <= 95; i++) {
  const y = H + 1 / (0.001236 + 0.0000294 * i);
  const y2 = y + (y - H) / 11725 * 1532;
  const d = `M65 ${y.toFixed(1)}L1597 ${y2.toFixed(1)}`;
  if (i % 10 === 0) major += d; else minor += d;
}
for (let i = -90; i <= 60; i++) {
  const at = (y) => (1062 - (y - H) * 0.0735 + i * 0.0471 * (y - H)).toFixed(1);
  const d = `M${at(160)} 160L${at(930)} 930`;
  if (i === -30) continue;
  if (i % 10 === 0) major += d; else minor += d;
}
document.getElementById('grid').innerHTML =
  `<path d="${minor}" stroke="#8f969e" stroke-width="1" opacity=".55"/>` +
  `<path d="${major}" stroke="#7f868e" stroke-width="1"/>` +
  '<path d="M65 550L638 168" stroke="#4b9a4b" stroke-width="2"/>';

/* Centripetal Catmull-Rom spline through a flat list of x,y values. */
function pts(s) {
  const n = s.split(/[ ,]+/).map(Number);
  return n.reduce((a, v, i) => (i % 2 ? a[a.length - 1].push(v) : a.push([v]), a), []);
}
const gap = (a, b) => Math.sqrt(Math.hypot(a[0] - b[0], a[1] - b[1]));
const handle = (a, b, c) => {
  const m = gap(a, b), n = gap(b, c);
  if (!m) return b;
  return b.map((v, k) => ((m * m * c[k] - n * n * a[k] + (2 * m * m + 3 * m * n + n * n) * v) / (3 * m * (m + n))).toFixed(1));
};
function seg(p) {
  let d = '';
  for (let i = 0; i < p.length - 1; i++) {
    const b = p[i], c = p[i + 1];
    d += `C${handle(p[i - 1] || b, b, c)} ${handle(p[i + 2] || c, c, b)} ${c}`;
  }
  return d;
}
const spline = (s) => { const p = pts(s); return `M${p[0]}${seg(p)}`; };
const stroke = (d, c, w) => `<path d="${d}" fill="none" stroke="${c}" stroke-width="${w}"/>`;
const fill = (d, c) => `<path d="${d}z" fill="${c}"/>`;

const hornRim = '1463,185 1440,154 1390,122 1300,94 1145,80 1000,92 860,117 735,150 600,207 500,280 450,335 441,375 460,430 520,485 600,535 700,572 800,597 877,609';
const hornEdge = '878,593 910,520 960,445 1010,382 1070,325 1150,265 1240,220 1320,197 1400,187 1463,185';
const upperLoops = '877,609 960,620 1040,617 1090,595 1111,558 1108,525 1085,500 1040,485 965,480 870,490 780,520 710,565 670,610 670,650 695,690 740,715 800,735 870,747 920,745 945,725 945,702 920,688 875,688 830,703 790,730 776,765 785,785 810,800 845,805 867,799 864,789 852,791 852,798';
const tailRim = '1340,1475 1328,1425 1295,1360 1240,1290 1160,1220 1072,1166';
const tailEdge = '988,1297 1045,1355 1120,1408 1220,1452 1340,1475';
const footLoop = '1072,1166 980,1120 880,1092 780,1075 700,1071 620,1078 540,1105 480,1150 447,1200 441,1250 460,1310 510,1358 580,1388 670,1397 740,1393 820,1378 900,1350 980,1303 1040,1235 1070,1170 1072,1130 1050,1075 1000,1028 920,983';
const midLoop = '920,983 840,957 760,945 700,957 665,980 657,1010 670,1040 700,1060 760,1069 830,1058 890,1030 925,995 934,965 915,930 880,902 830,882 790,876 772,885 775,900 800,909 835,904 860,888 862,873 845,852';
const green = '1993,915 1960,857 1910,791 1845,733 1754,675 1670,628 1568,577 1430,530 1300,495 1150,465 965,451 750,455 530,487 400,520 260,585 140,670 75,755 51,850 65,920 120,1010 220,1095 330,1148 450,1186 600,1213 760,1222 920,1210 1074,1170 1200,1110 1300,1030 1348,960 1363,900 1345,830 1290,768 1200,708 1080,663 925,640 800,640 668,668 570,715 515,770 495,825 510,875 570,925 670,964 750,978 820,982 890,974 935,965 1000,930 1043,885 1053,850 1035,812 990,780 918,757 840,755 762,773 725,800 717,830 735,853 780,872 830,878 870,870 893,857';
const greenFront = ['450,1186 600,1213 760,1222 920,1210 1074,1170', '670,964 750,978 820,982 890,974 935,965', '735,853 780,872 830,878 870,870 893,857'];

const iso = `735,150 790,240 835,360 870,500 880,580|580,222 680,310 760,430 830,590|600,210 710,310 790,450 845,590|620,203 720,300 800,440 850,580|498,288 620,350 720,450 790,575|445,348 560,380 650,430 730,520 765,585|455,403 560,415 660,460 740,545|520,470 600,460 670,485 740,550|540,478 620,470 700,510 750,560|560,492 640,480 720,520|640,542 680,522 730,545|862,115 890,230 915,400 920,590|905,108 915,300 925,480 905,590|940,100 935,300 925,480 915,600|1085,87 1020,200 975,340 945,480 920,590|1215,85 1120,170 1030,300 975,420 935,520|1240,90 1140,170 1050,290 985,400|1270,95 1150,180 1060,300 980,410|1390,127 1250,160 1120,240 1030,335
1010,487 960,530 930,600|1075,505 990,550 935,600|1110,543 1020,553 935,605|1098,583 1010,585 940,605|1040,610 980,601 930,603|670,597 730,615 765,650|668,628 730,640 770,690|680,660 740,670 772,700|710,690 750,688 775,705|940,712 900,720|930,695 895,715
762,555 772,640 767,800 762,980|795,570 775,700 770,850 765,1000|840,640 800,720 795,860 790,1080|920,620 840,680 810,760 800,900 800,1070|920,625 860,680 825,760 812,900 812,1080|920,635 885,690 870,800 868,920 905,1040|890,640 880,750 875,900 880,980|915,640 905,780 895,900 890,1000|870,640 830,720 822,860 845,980 900,1050|918,640 914,780 908,960|885,650 888,780 880,930|825,610 805,650 785,720|790,575 780,640 778,700
750,1075 740,1200 735,1392|760,1075 762,1230 768,1388|768,1075 775,1230 803,1380|800,1080 830,1230 895,1345|735,1080 690,1250 632,1392|730,1095 650,1260 545,1370|735,1090 630,1260 525,1360|725,1110 620,1260 512,1352|720,1110 600,1245 460,1295|715,1120 600,1210 445,1225|705,1118 600,1158 490,1150|700,1122 630,1115 570,1093|710,1118 640,1110 585,1088|720,1115 660,1108 605,1083|700,1120 720,1100 735,1075
800,1000 830,1075 880,1180 970,1290|810,1000 840,1080 890,1180 990,1295|820,1000 850,1070 920,1200 1020,1258|960,1230 1060,1275 1140,1258 1180,1230|990,1240 1060,1265 1130,1240 1160,1225|1020,1250 1080,1250 1140,1217|960,1230 1040,1320 1150,1360 1280,1357|905,1020 940,1040 980,1020|900,1040 960,1075 1045,1080|890,1040 950,1110 1070,1137|885,1060 950,1160 1050,1195|760,985 710,1003 662,1005|760,990 720,1015 670,1038|765,995 740,1030 705,1060|755,980 710,968 670,975|780,1000 770,1040 750,1068|790,1000 795,1068|850,980 870,1010 900,1035`.split(/[|\n]/);

const lobes = upperLoops.split(' ');
const lower = footLoop.split(' ');
document.getElementById('model').innerHTML =
  stroke(spline(green), '#1c7f2a', 1.5) +
  fill(spline(tailRim) + 'L988,1297' + seg(pts(tailEdge)), 'url(#gTail)') +
  fill(spline(lower.slice(2).join(' ')) + 'L850,960L760,985L750,1075', 'url(#gFoot)') +
  '<ellipse cx="990" cy="1090" rx="70" ry="60" fill="url(#gDark)" opacity=".6"/>' +
  '<ellipse cx="640" cy="1110" rx="90" ry="30" fill="url(#gDark)" opacity=".5"/>' +
  '<ellipse cx="810" cy="1310" rx="150" ry="80" fill="url(#gGlow)"/>' +
  fill(spline(midLoop.split(' ').slice(0, 13).join(' ')), '#a9624f') +
  '<ellipse cx="805" cy="1020" rx="60" ry="45" fill="url(#gGlow)"/>' +
  fill(spline(lobes.slice(0, 23).join(' ')), '#9f5e4c') +
  fill('M760,560L925,600L920,700L915,850L905,1045L870,1010L845,960L757,985L765,800z', 'url(#gTube)') +
  fill('M830,800Q838,870 832,960L850,980L842,860z', '#6f463c') +
  fill('M770,590L915,615Q850,650 815,720L778,700z', '#b06450') +
  fill(spline(hornRim) + 'L878,593' + seg(pts(hornEdge)), 'url(#gHorn)') +
  '<ellipse cx="640" cy="430" rx="130" ry="52" transform="rotate(28 640 430)" fill="url(#gDark)"/>' +
  '<ellipse cx="745" cy="530" rx="60" ry="30" transform="rotate(30 745 530)" fill="url(#gDark)"/>' +
  '<ellipse cx="1060" cy="310" rx="90" ry="22" transform="rotate(-42 1060 310)" fill="url(#gDark)" opacity=".8"/>' +
  '<ellipse cx="870" cy="550" rx="50" ry="60" fill="url(#gGlow)" opacity=".7"/>' +
  '<ellipse cx="885" cy="232" rx="150" ry="95" fill="url(#gShine)"/>' +
  fill(spline('930,600 945,540 975,482 1040,485 1085,500 1108,525 1111,558 1090,595 1040,617 960,620'), '#a4614e') +
  iso.map((s, i) => stroke(spline(s), '#ff8c6c', i % 3 ? 1.2 : 1.8)).join('') +
  stroke(spline(hornEdge), '#1c0f0c', 1.3) + stroke(spline(tailEdge), '#1c0f0c', 1.3) +
  greenFront.map((s) => stroke(spline(s), '#2b7a20', 1.6)).join('') +
  stroke(spline(hornRim + ' ' + upperLoops.slice(8)), '#ffd92a', 1.8) +
  stroke(spline(tailRim + ' ' + footLoop.slice(10) + ' ' + midLoop.slice(8)), '#ffd92a', 1.8) +
  stroke('M1463,185L1340,1475', '#f0b01c', 1.2);
document.getElementById('shapeCurve').innerHTML =
  stroke(spline('1056,291 1080,292 1104,297 1153,315 1185,338 1210,365 1235,405 1247,440 1251,472 1247,507 1235,543 1217,575 1190,607 1150,637 1100,658 1045,668 1012,667'), '#f4ee38', 1.3);
```
